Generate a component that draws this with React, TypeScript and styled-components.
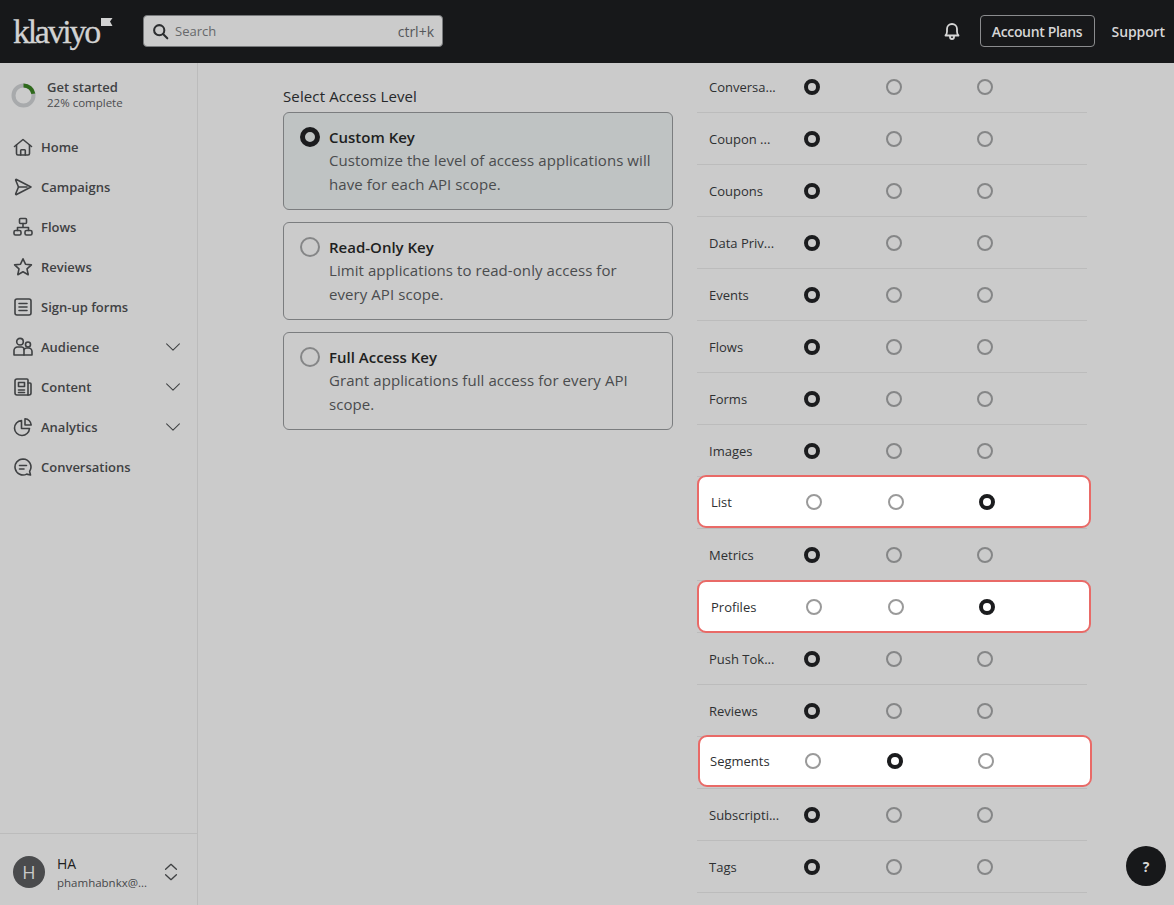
import React from 'react';
import styled, { createGlobalStyle } from 'styled-components';

const GlobalStyle = createGlobalStyle`
  html, body {
    margin: 0;
    height: 100%;
    overflow: hidden;
    background: #cbcbcb;
    font-family: 'Open Sans', 'Noto Sans', 'Liberation Sans', sans-serif;
  }
  * { box-sizing: border-box; }
`;

const Page = styled.div`
  width: 1174px;
  height: 905px;
  display: flex;
  flex-direction: column;
  position: relative;
  overflow: hidden;
`;

// Header
const TopBar = styled.header`
  height: 63px;
  flex: none;
  background: #17181a;
  display: flex;
  align-items: center;
  padding: 0 9px 1px 13px;
  position: relative;
  z-index: 2;
`;

const Logo = styled.div`
  width: 130px;
  display: flex;
  align-items: flex-start;
  margin-top: 1px;
  color: #d2d2d2;
  font-family: 'Liberation Serif', serif;
  font-size: 34px;
  line-height: 34px;
  letter-spacing: -2.3px;
  -webkit-text-stroke: 0.3px #d2d2d2;
  svg { margin: 2px 0 0 2px; }
`;

const SearchBox = styled.div`
  width: 300px;
  height: 32px;
  background: #cbcbcb;
  border: 1px solid #77797b;
  border-radius: 4px;
  display: flex;
  align-items: center;
  padding: 0 8px;
  font-size: 13px;
  color: #66686a;
  svg { margin-right: 6px; }
  span:last-child { margin-left: auto; color: #55575a; font-size: 14px; }
`;

const TopActions = styled.div`
  margin-left: auto;
  display: flex;
  align-items: center;
  color: #d6d6d6;
  font-size: 14px;
  font-weight: 600;
`;

const PlansButton = styled.div`
  width: 115px;
  height: 32px;
  margin: 0 17px 0 18px;
  border: 1px solid #8b8c8e;
  border-radius: 4px;
  display: flex;
  align-items: center;
  justify-content: center;
  letter-spacing: -0.35px;
`;

const SupportLink = styled.span`
  letter-spacing: -0.1px;
`;

// Sidebar
const Body = styled.div`
  flex: 1;
  display: flex;
  min-height: 0;
`;

const Sidebar = styled.aside`
  width: 198px;
  flex: none;
  border-right: 1px solid #bcbcbc;
  display: flex;
  flex-direction: column;
`;

const Started = styled.div`
  display: flex;
  align-items: center;
  gap: 11px;
  padding-left: 11px;
  height: 64px;
  line-height: 16px;
  b { display: block; font-size: 13px; font-weight: 600; color: #3f4143; }
  small { display: block; font-size: 11.5px; color: #4b4d50; }
`;

const NavList = styled.nav`
  display: flex;
  flex-direction: column;
`;

const NavItem = styled.div`
  height: 40px;
  display: flex;
  align-items: center;
  padding: 0 16px 0 13px;
  color: #3f4143;
  font-size: 13px;
  font-weight: 600;
  svg:first-child { margin-right: 8px; }
  svg:last-child:not(:first-child) { margin-left: auto; }
`;

const UserBar = styled.div`
  margin-top: auto;
  height: 72px;
  border-top: 1px solid #bcbcbc;
  display: flex;
  align-items: center;
  padding: 5px 17px 0 13px;
  svg { margin-left: auto; }
`;

const Avatar = styled.div`
  width: 32px;
  height: 32px;
  border-radius: 50%;
  background: #4a4b4d;
  color: #c9c9c9;
  font-size: 18px;
  display: flex;
  align-items: center;
  justify-content: center;
  margin-right: 12px;
`;

const UserText = styled.div`
  line-height: 19px;
  padding-top: 2px;
  b { display: block; font-size: 14px; font-weight: 500; color: #1e1f21; }
  small { display: block; font-size: 11.5px; color: #46474a; }
`;

// Main
const Main = styled.main`
  flex: 1;
  display: flex;
  overflow: hidden;
  padding-left: 85px;
  gap: 24px;
`;

const LevelColumn = styled.section`
  width: 390px;
  flex: none;
  padding-top: 22px;
`;

const LevelTitle = styled.div`
  font-size: 15px;
  letter-spacing: 0.12px;
  line-height: 22px;
  height: 27px;
  color: #26282a;
`;

const LevelCards = styled.div`
  display: flex;
  flex-direction: column;
  gap: 12px;
`;

const LevelCard = styled.div<{ $active?: boolean }>`
  height: 98px;
  border: 1px solid #7b7d7f;
  border-radius: 6px;
  background: ${({ $active }) => ($active ? '#bfc3c3' : 'transparent')};
  display: flex;
  gap: 9px;
  padding: 14px 16px;
`;

const LevelText = styled.div`
  h4 {
    margin: 0;
    font-size: 15px;
    font-weight: 600;
    line-height: 21px;
    color: #1e1f21;
  }
  p {
    margin: 0;
    font-size: 15px;
    letter-spacing: 0.07px;
    line-height: 24px;
    color: #4a4c4e;
  }
`;

const Radio = styled.span<{ $checked?: boolean; $size?: number; $onWhite?: boolean }>`
  display: block;
  flex: none;
  width: ${({ $size }) => $size ?? 16}px;
  height: ${({ $size }) => $size ?? 16}px;
  border-radius: 50%;
  border: ${({ $checked, $size, $onWhite }) =>
    $checked
      ? `${($size ?? 16) > 16 ? 5 : 4}px solid #1b1c1e`
      : `2px solid ${$onWhite ? '#9a9a9a' : '#858687'}`};
`;

const ScopeColumn = styled.section`
  width: 390px;
  flex: none;
  margin-top: -2px;
`;

const ScopeRow = styled.div`
  height: 52px;
  border-bottom: 1px solid #bcbcbc;
  display: grid;
  grid-template-columns: 95px 82px 91px 1fr;
  align-items: center;
  padding-left: 12px;
  position: relative;
  color: #2e3032;
  font-size: 13px;
`;

// red annotation boxes drawn over the row, a bit off the row's own grid
const Callout = styled.div<{ $top: number; $left: number; $height: number; $inset: number }>`
  position: absolute;
  top: ${({ $top }) => $top}px;
  left: ${({ $left }) => $left}px;
  width: 394px;
  height: ${({ $height }) => $height}px;
  background: #fff;
  border: 2px solid #e96a67;
  border-radius: 9px;
  display: grid;
  grid-template-columns: 95px 82px 91px 1fr;
  align-items: center;
  padding-left: ${({ $inset }) => $inset}px;
  color: #2e3032;
  font-size: 13px;
`;

const HelpButton = styled.div`
  position: absolute;
  right: 8px;
  bottom: 19px;
  width: 40px;
  height: 40px;
  border-radius: 50%;
  background: #17181a;
  color: #d6d6d6;
  font-size: 14px;
  font-weight: 700;
  display: flex;
  align-items: center;
  justify-content: center;
`;

type IconProps = { children: React.ReactNode; size?: number; color?: string; width?: number };

const Icon = ({ children, size = 20, color = '#3f4143', width = 1.6 }: IconProps) => (
  <svg
    width={size}
    height={size}
    viewBox='0 0 20 20'
    fill='none'
    stroke={color}
    strokeWidth={width}
    strokeLinecap='round'
    strokeLinejoin='round'
  >
    {children}
  </svg>
);

const navIcons: Record<string, React.ReactNode> = {
  Home: (
    <>
      <path d='M1.5 9.5 10 2.5l8.5 7' />
      <path d='M3.500 8v8.500A1.500 1.500 0 0 0 5 18h10a1.500 1.500 0 0 0 1.500-1.500V8' />
      <path d='M7.700 18v-4.500a.7.7 0 0 1 .7-.7h3.200a.7.7 0 0 1 .7.7V18' />
    </>
  ),
  Campaigns: (
    <>
      <path d='M3.500 2.500 18 10 3.500 17.500c-.6.300-1-.2-.8-.8L5.500 10 2.700 3.300c-.2-.6.2-1.100.8-.8Z' />
      <path d='M5.500 10H14' />
    </>
  ),
  Flows: (
    <>
      <rect x='6.500' y='1.500' width='7' height='5' rx='1' />
      <rect x='1' y='13.500' width='7' height='4.500' rx='1.500' />
      <rect x='12' y='13.500' width='7' height='4.500' rx='1.500' />
      <path d='M10 6.500v4M4.500 13.500v-3h11v3' />
    </>
  ),
  Reviews: (
    <path d='m10 1.800 2.500 5.400 5.900.7-4.400 4 1.200 5.800-5.200-2.900-5.200 2.900 1.200-5.800-4.400-4 5.900-.7L10 1.800Z' />
  ),
  'Sign-up forms': (
    <>
      <rect x='2' y='2' width='16' height='16' rx='2' />
      <path d='M6 6.500h8M6 10h8M6 13.500h8' />
    </>
  ),
  Audience: (
    <>
      <circle cx='7' cy='4.700' r='3.300' />
      <circle cx='15' cy='7.500' r='2.500' />
      <path d='M1 18v-4.500A3.500 3.500 0 0 1 4.500 10h4a3.500 3.500 0 0 1 2.500 1.500V18H1Z' />
      <path d='M11 18h8v-3.500a3.500 3.500 0 0 0-3.500-3.500h-1.500a3.500 3.500 0 0 0-3 1.500' />
    </>
  ),
  Content: (
    <>
      <path d='M4 2h10a1 1 0 0 1 1 1v15H4a2 2 0 0 1-2-2V4a2 2 0 0 1 2-2Z' />
      <path d='M15 6h2a1 1 0 0 1 1 1v9a2 2 0 0 1-2 2h-1' />
      <rect x='5.500' y='5.500' width='6' height='4' />
      <path d='M5.500 13h6M5.500 15.500h6' />
    </>
  ),
  Analytics: (
    <>
      <path d='M8.500 3.500a7.500 7.500 0 1 0 8 8h-8v-8Z' />
      <path d='M12 1.800a6.500 6.500 0 0 1 6.200 6.200H12V1.800Z' />
    </>
  ),
  Conversations: (
    <>
      <path d='M10 2a8 8 0 1 0 3.700 15.100l3.800.9-.9-3.600A8 8 0 0 0 10 2Z' />
      <path d='M6.500 8.500h7M6.500 12h4.500' />
    </>
  ),
};

const navItems: { label: string; expandable?: boolean }[] = [
  { label: 'Home' },
  { label: 'Campaigns' },
  { label: 'Flows' },
  { label: 'Reviews' },
  { label: 'Sign-up forms' },
  { label: 'Audience', expandable: true },
  { label: 'Content', expandable: true },
  { label: 'Analytics', expandable: true },
  { label: 'Conversations' },
];

const levels = [
  {
    title: 'Custom Key',
    text: 'Customize the level of access applications will have for each API scope.',
    active: true,
  },
  {
    title: 'Read-Only Key',
    text: 'Limit applications to read-only access for every API scope.',
  },
  {
    title: 'Full Access Key',
    text: 'Grant applications full access for every API scope.',
  },
];

interface IScope {
  label: string;
  callout?: { top: number; left: number; height: number; inset: number; checked: number };
}

const scopes: IScope[] = [
  { label: 'Conversa...' },
  { label: 'Coupon ...' },
  { label: 'Coupons' },
  { label: 'Data Priv...' },
  { label: 'Events' },
  { label: 'Flows' },
  { label: 'Forms' },
  { label: 'Images' },
  { label: 'List', callout: { top: -2, left: 0, height: 53, inset: 12, checked: 2 } },
  { label: 'Metrics' },
  { label: 'Profiles', callout: { top: -1, left: 0, height: 53, inset: 12, checked: 2 } },
  { label: 'Push Tok...' },
  { label: 'Reviews' },
  { label: 'Segments', callout: { top: -2, left: 1, height: 52, inset: 10, checked: 1 } },
  { label: 'Subscripti...' },
  { label: 'Tags' },
];

const ProgressRing = () => (
  <svg width='25' height='25' viewBox='0 0 25 25' fill='none' strokeWidth='4'>
    <circle cx='12.500' cy='12.500' r='10' stroke='#a8aaac' />
    <circle
      cx='12.500'
      cy='12.500'
      r='10'
      stroke='#2f6a1c'
      strokeDasharray='13.800 62.900'
      transform='rotate(-90 12.500 12.500)'
    />
  </svg>
);

const App = () => {
  return (
    <Page>
      <GlobalStyle />
      <TopBar>
        <Logo>
          klaviyo
          <svg width='12' height='11' viewBox='0 0 12 11'>
            <path d='M0 1h11.500L9 4.500 11.500 9H0Z' fill='#d2d2d2' />
          </svg>
        </Logo>
        <SearchBox>
          <Icon size={17} color='#2c2e30' width={2.4}>
            <circle cx='8.500' cy='8.500' r='6' />
            <path d='m13 13 5 5' />
          </Icon>
          <span>Search</span>
          <span>ctrl+k</span>
        </SearchBox>
        <TopActions>
          <Icon size={20} color='#d6d6d6' width={1.8}>
            <path d='M3.500 14.500c1-1 1.500-2.500 1.500-4V8a5 5 0 0 1 10 0v2.500c0 1.500.5 3 1.500 4H3.500Z' />
            <path d='M8 15v1a2 2 0 0 0 4 0v-1' />
          </Icon>
          <PlansButton>Account Plans</PlansButton>
          <SupportLink>Support</SupportLink>
        </TopActions>
      </TopBar>

      <Body>
        <Sidebar>
          <Started>
            <ProgressRing />
            <div>
              <b>Get started</b>
              <small>22% complete</small>
            </div>
          </Started>
          <NavList>
            {navItems.map((item) => (
              <NavItem key={item.label}>
                <Icon>{navIcons[item.label]}</Icon>
                {item.label}
                {item.expandable && (
                  <Icon size={16} width={1.3}>
                    <path d='m2 6 8 8 8-8' />
                  </Icon>
                )}
              </NavItem>
            ))}
          </NavList>
          <UserBar>
            <Avatar>H</Avatar>
            <UserText>
              <b>HA</b>
              <small>phamhabnkx@...</small>
            </UserText>
            <Icon size={18} width={1.5}>
              <path d='m4 7 6-5.500L16 7M4 13l6 5.500 6-5.500' />
            </Icon>
          </UserBar>
        </Sidebar>

        <Main>
          <LevelColumn>
            <LevelTitle>Select Access Level</LevelTitle>
            <LevelCards>
              {levels.map((level) => (
                <LevelCard key={level.title} $active={level.active}>
                  <Radio $size={20} $checked={level.active} />
                  <LevelText>
                    <h4>{level.title}</h4>
                    <p>{level.text}</p>
                  </LevelText>
                </LevelCard>
              ))}
            </LevelCards>
          </LevelColumn>

          <ScopeColumn>
            {scopes.map(({ label, callout }) => (
              <ScopeRow key={label}>
                {callout ? (
                  <Callout
                    $top={callout.top}
                    $left={callout.left}
                    $height={callout.height}
                    $inset={callout.inset}
                  >
                    <span>{label}</span>
                    {[0, 1, 2].map((i) => (
                      <Radio key={i} $onWhite $checked={callout.checked === i} />
                    ))}
                  </Callout>
                ) : (
                  <>
                    <span>{label}</span>
                    <Radio $checked />
                    <Radio />
                    <Radio />
                  </>
                )}
              </ScopeRow>
            ))}
          </ScopeColumn>
        </Main>
      </Body>

      <HelpButton>?</HelpButton>
    </Page>
  );
};

export default App;
